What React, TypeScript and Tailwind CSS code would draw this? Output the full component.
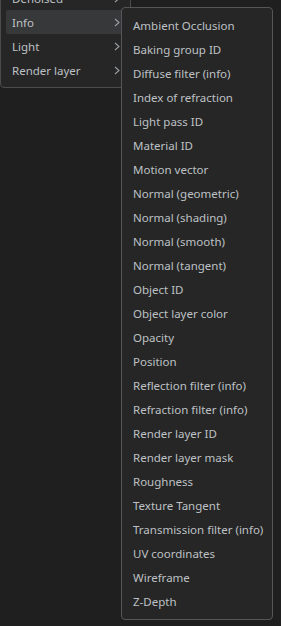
const parents = ['Denoised', 'Info', 'Light', 'Render layer'];

const infoItems = [
  'Ambient Occlusion',
  'Baking group ID',
  'Diffuse filter (info)',
  'Index of refraction',
  'Light pass ID',
  'Material ID',
  'Motion vector',
  'Normal (geometric)',
  'Normal (shading)',
  'Normal (smooth)',
  'Normal (tangent)',
  'Object ID',
  'Object layer color',
  'Opacity',
  'Position',
  'Reflection filter (info)',
  'Refraction filter (info)',
  'Render layer ID',
  'Render layer mask',
  'Roughness',
  'Texture Tangent',
  'Transmission filter (info)',
  'UV coordinates',
  'Wireframe',
  'Z-Depth',
];

function Chevron() {
  return (
    <svg width="6" height="9" viewBox="0 0 6 9" className="shrink-0">
      <path d="M1 1 L5 4.5 L1 8" fill="none" stroke="#9a9ea3" strokeWidth="1.1" />
    </svg>
  );
}

export default function App() {
  return (
    <div
      className="relative w-[281px] h-[626px] overflow-hidden bg-[#1f1f1f] text-[11.5px] text-[#bec1c5]"
      style={{ fontFamily: '"Noto Sans", "Open Sans", sans-serif' }}
    >
      {/* parent menu */}
      <div className="-mt-[20px] w-[131px] border border-[#4c4c4c] rounded-b-[4px] bg-[#262626] px-[5px] pt-[5px] pb-[5px]">
        {parents.map((p) => (
          <div
            key={p}
            className={`flex items-center justify-between h-[24px] pl-[6px] pr-[5px] rounded-[2px] ${p === 'Info' ? 'bg-[#37383a]' : ''}`}
          >
            <span className="leading-none pt-[1px]">{p}</span>
            <Chevron />
          </div>
        ))}
      </div>

      {/* submenu */}
      <div className="absolute left-[121px] top-[7px] w-[152px] border border-[#545659] rounded-[4px] bg-[#262626] pt-[5px] pb-[6px] px-[5px]">
        {infoItems.map((item) => (
          <div key={item} className="flex items-center h-[24px] pl-[6px] whitespace-nowrap">
            <span className="leading-none pt-[1px]">{item}</span>
          </div>
        ))}
      </div>
    </div>
  );
}
